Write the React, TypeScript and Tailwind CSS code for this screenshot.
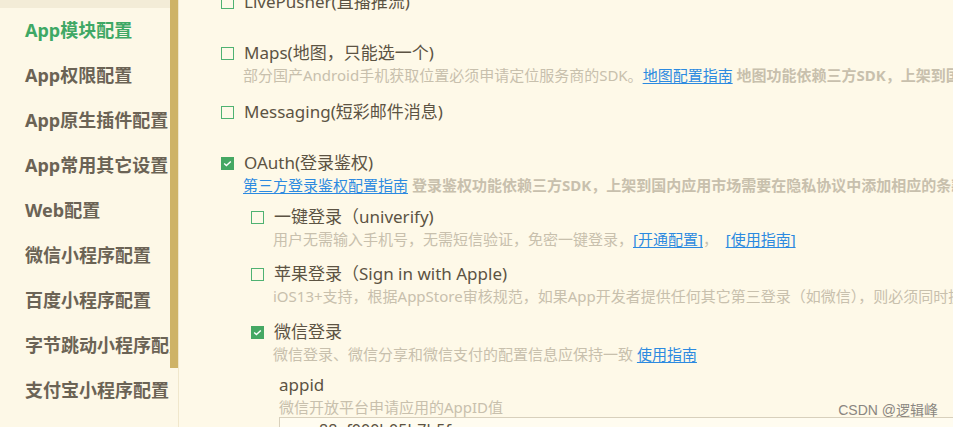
import React from "react";

const FONT = { fontFamily: '"Noto Sans", "Noto Sans CJK SC", sans-serif' };

function Box({ checked }: { checked?: boolean }) {
  if (checked) {
    return (
      <span className="flex h-[13px] w-[13px] shrink-0 items-center justify-center bg-[#45a863]">
        <svg width="9" height="7" viewBox="0 0 9 7" fill="none">
          <polyline points="1.2,3.6 3.4,5.6 7.8,1.4" stroke="#ffffff" strokeWidth="1.4" />
        </svg>
      </span>
    );
  }
  return <span className="box-border block h-[13px] w-[13px] shrink-0 border border-solid border-[#4fb272]" />;
}

function Row({ checked, label, className = "" }: { checked?: boolean; label: string; className?: string }) {
  return (
    <div className={`flex h-[24px] items-center gap-[10px] text-[17px] leading-[24px] text-[#5c5343] whitespace-nowrap ${className}`}>
      <Box checked={checked} />
      <span>{label}</span>
    </div>
  );
}

function Desc({ children }: { children: React.ReactNode }) {
  return (
    <div className="pl-[22px] text-[15px] leading-[20px] text-[#c8c0ad] whitespace-nowrap">{children}</div>
  );
}

function Link({ children }: { children: React.ReactNode }) {
  return <span className="text-[#2c8ae0] underline underline-offset-2">{children}</span>;
}

const menu = [
  "App模块配置",
  "App权限配置",
  "App原生插件配置",
  "App常用其它设置",
  "Web配置",
  "微信小程序配置",
  "百度小程序配置",
  "字节跳动小程序配置",
  "支付宝小程序配置",
];

export default function App() {
  return (
    <div className="flex h-[427px] w-[953px] overflow-hidden bg-[#fef9e8]" style={FONT}>
      {/* sidebar */}
      <div className="flex h-full w-[179px] shrink-0 bg-[#fdf8e7]">
        <div className="w-[170px] shrink-0 overflow-hidden">
          <div className="h-[8px] bg-[#f3ecd7]" />
          {menu.map((m, i) => (
            <div
              key={m}
              className={`flex h-[45px] items-center pl-[25px] text-[18px] font-bold whitespace-nowrap ${
                i === 0 ? "text-[#3fa865]" : "text-[#6b6355]"
              }`}
            >
              {m}
            </div>
          ))}
        </div>
        <div className="w-[8px] shrink-0">
          <div className="h-[368px] w-full bg-[#ceb367]" />
        </div>
        <div className="w-[1px] shrink-0 bg-[#f0e7cc]" />
      </div>

      {/* main */}
      <div className="relative h-full min-w-0 flex-1 overflow-hidden">
        <div className="mt-[-10px] pl-[42px]">
          <Row label="LivePusher(直播推流)" />

          <Row label="Maps(地图，只能选一个)" className="mt-[27px]" />
          <Desc>
            部分国产Android手机获取位置必须申请定位服务商的SDK。<Link>地图配置指南</Link>{" "}
            <span className="font-bold">地图功能依赖三方SDK，上架到国内应用市场需要在隐私协议中添加相应的条款</span>
          </Desc>

          <Row label="Messaging(短彩邮件消息)" className="mt-[15px]" />

          <Row checked label="OAuth(登录鉴权)" className="mt-[27px]" />
          <Desc>
            <Link>第三方登录鉴权配置指南</Link>{" "}
            <span className="font-bold">登录鉴权功能依赖三方SDK，上架到国内应用市场需要在隐私协议中添加相应的条款</span>
          </Desc>

          <div className="pl-[30px]">
            <Row label="一键登录（univerify)" className="mt-[10px]" />
            <Desc>
              用户无需输入手机号，无需短信验证，免密一键登录，<Link>[开通配置]</Link>，&nbsp;&nbsp;<Link>[使用指南]</Link>
            </Desc>

            <Row label="苹果登录（Sign in with Apple)" className="mt-[13px]" />
            <Desc>
              iOS13+支持，根据AppStore审核规范，如果App开发者提供任何其它第三登录（如微信），则必须同时提供苹果登录
            </Desc>

            <Row checked label="微信登录" className="mt-[14px]" />
            <Desc>
              微信登录、微信分享和微信支付的配置信息应保持一致 <Link>使用指南</Link>
            </Desc>

            <div className="mt-[9px] pl-[28px]">
              <div className="text-[17px] leading-[24px] text-[#5c5343]">appid</div>
              <div className="text-[15px] leading-[20px] text-[#c8c0ad] whitespace-nowrap">微信开放平台申请应用的AppID值</div>
              <div className="box-border h-[34px] w-[700px] border border-[#d8d0bc] bg-[#fffcf0] pl-[18px] text-[16px] leading-[24px] text-[#5c5343]">
                wx88af000b05b7b5f
              </div>
            </div>
          </div>
        </div>

        <div
          className="absolute right-[15px] top-[400px] text-[14px] leading-[20px] text-[#8a8680]"
          style={{ fontFamily: '"Liberation Sans", "Noto Sans CJK SC", sans-serif' }}
        >
          CSDN @逻辑峰
        </div>
      </div>
    </div>
  );
}
